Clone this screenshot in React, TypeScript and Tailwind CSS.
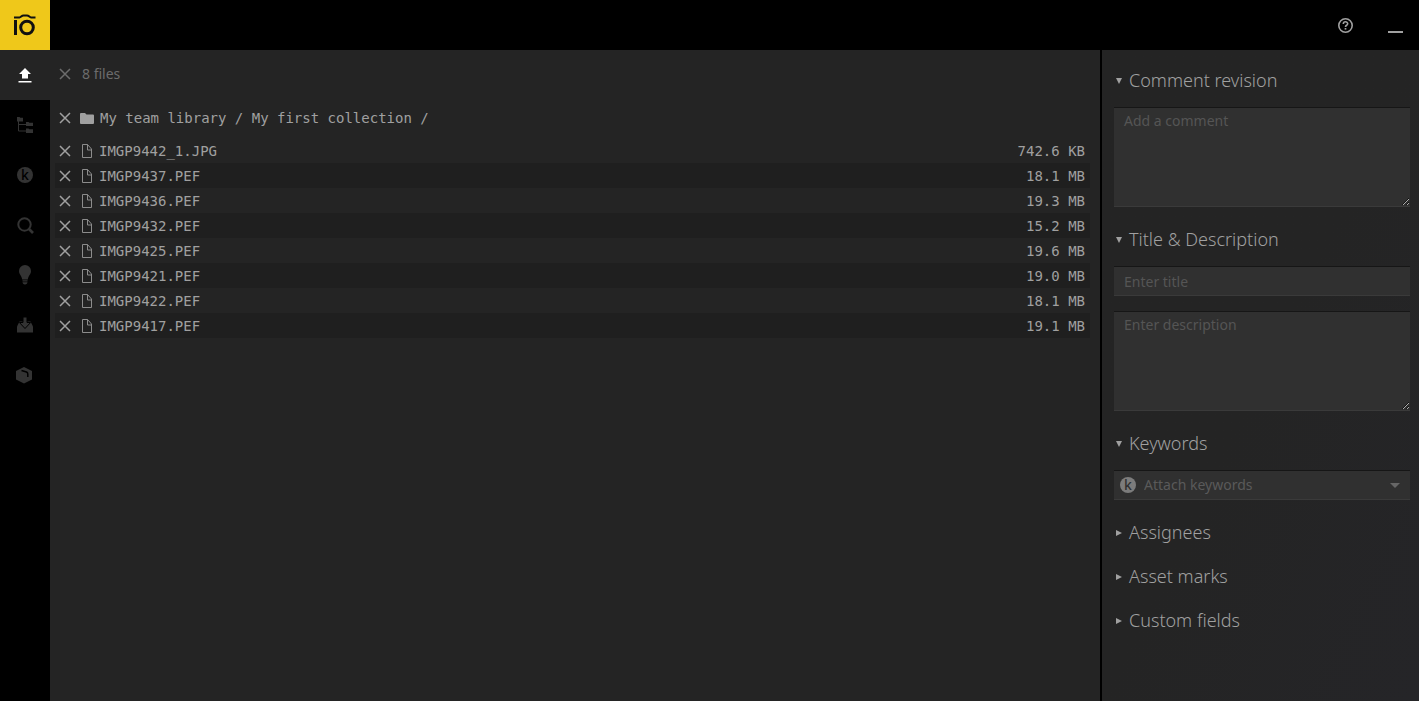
import { useState } from "react";
import type { ReactNode } from "react";

const files = [
  { name: "IMGP9442_1.JPG", size: "742.6 KB" },
  { name: "IMGP9437.PEF", size: "18.1 MB" },
  { name: "IMGP9436.PEF", size: "19.3 MB" },
  { name: "IMGP9432.PEF", size: "15.2 MB" },
  { name: "IMGP9425.PEF", size: "19.6 MB" },
  { name: "IMGP9421.PEF", size: "19.0 MB" },
  { name: "IMGP9422.PEF", size: "18.1 MB" },
  { name: "IMGP9417.PEF", size: "19.1 MB" },
];

const fieldClass =
  "block w-full border-t border-b border-t-[#161616] border-b-[#3a3a3a] bg-[#303030] text-sm outline-none placeholder:text-[#555]";

const Logo = () => (
  <svg width="24" height="22" viewBox="0 0 24 22" fill="none" stroke="#111">
    <path d="M1 3.5h5.5c1.500 0 2-2 4-2h3.500c2 0 2.500 2 4 2h4.500" strokeWidth="2" />
    <path d="M2.500 6v15" strokeWidth="3" />
    <circle cx="14" cy="13.500" r="6.300" strokeWidth="3" />
  </svg>
);

const KeywordIcon = ({ letter }: { letter: string }) => (
  <svg width="16" height="16" viewBox="0 0 16 16" fill="currentColor" className="overflow-visible">
    <circle cx="8" cy="8" r="8" />
    <text
      x="8"
      y="13"
      textAnchor="middle"
      fill={letter}
      className="font-['Noto_Sans',sans-serif] text-[14px] font-medium"
    >
      k
    </text>
  </svg>
);

const CloseIcon = () => (
  <svg width="12" height="12" viewBox="0 0 12 12" fill="none" stroke="currentColor" strokeWidth="1.500">
    <path d="M1 1l10 10M11 1L1 11" />
  </svg>
);

const FileIcon = () => (
  <svg width="10" height="14" viewBox="0 0 10 14" fill="none" stroke="currentColor" className="text-[#8c8c8c]">
    <path d="M.5.5h5l4 4.500v8.500h-9zM5.500.5v5.500h4" />
  </svg>
);

const FolderIcon = () => (
  <svg width="14" height="11" viewBox="0 0 14 11" fill="currentColor">
    <path d="M0 1a1 1 0 0 1 1-1h4l1.500 1.500H13a1 1 0 0 1 1 1V10a1 1 0 0 1-1 1H1a1 1 0 0 1-1-1z" />
  </svg>
);

const navItems: { label: string; icon: ReactNode }[] = [
  {
    label: "Upload",
    icon: (
      <svg width="14" height="16" viewBox="0 0 14 16" fill="currentColor">
        <path d="M7 1l6 6h-3v4.500H4V7H1zM.5 14h13v1.500H.5z" />
      </svg>
    ),
  },
  {
    label: "Collections",
    icon: (
      <svg width="16" height="16" viewBox="0 0 16 16" fill="currentColor">
        <path d="M0 0h2.500l.8.8H6V4.500H0zM9 5h2.500l.8.8H16V9H9zM9 11.500h2.500l.8.8H16v3.700H9z" />
        <path d="M1.500 4v10H9M1.500 7.500H9" fill="none" stroke="currentColor" />
      </svg>
    ),
  },
  { label: "Keywords", icon: <KeywordIcon letter="#000" /> },
  {
    label: "Search",
    icon: (
      <svg width="17" height="17" viewBox="0 0 17 17" fill="none" stroke="currentColor">
        <circle cx="7.500" cy="7.500" r="6.200" strokeWidth="2" />
        <path d="M12 12l4 4" strokeWidth="2.600" />
      </svg>
    ),
  },
  {
    label: "Lightboards",
    icon: (
      <svg width="12" height="20" viewBox="0 0 12 20" fill="currentColor">
        <path d="M6 0a6 6 0 0 1 6 6c0 3.500-2.700 4.500-3.200 8.500H3.200C2.700 10.500 0 9.500 0 6a6 6 0 0 1 6-6zM3.500 15.300h5v1.200h-5zM3.500 17.200h5c0 1-1 2.300-2.500 2.300s-2.500-1.300-2.500-2.300z" />
      </svg>
    ),
  },
  {
    label: "Inbox",
    icon: (
      <svg width="16" height="16" viewBox="0 0 16 16" fill="currentColor">
        <path d="M2.500 4.500h11L16 9.500v6H0v-6z" />
        <path d="M6 0h4v5.500h3.600L8 11.500 2.400 5.500H6z" stroke="#000" strokeWidth="1" />
      </svg>
    ),
  },
  {
    label: "Packages",
    icon: (
      <svg width="18" height="17" viewBox="0 0 18 17" fill="currentColor">
        <path d="M8 0l8 4v8.500l-8 4-8-4V4z" />
        <path d="M5.500 3.500l5 1.500c1 .5 1.300 1 1.300 2v3" fill="none" stroke="#000" strokeWidth="1.500" />
      </svg>
    ),
  },
];

type SectionProps = { title: string; defaultOpen?: boolean; children?: ReactNode };

const Section = ({ title, defaultOpen = false, children }: SectionProps) => {
  const [open, setOpen] = useState(defaultOpen);

  return (
    <section>
      <h2>
        <button
          type="button"
          aria-expanded={open}
          onClick={() => setOpen(!open)}
          className="flex h-11 w-full items-center gap-1.5 pl-0.5 text-left text-lg font-light text-[#a0a0a0]"
        >
          <svg width="7" height="7" viewBox="0 0 7 7" fill="currentColor">
            <path d={open ? "M0 1h6l-3 6z" : "M0 1l6 3-6 3z"} />
          </svg>
          {title}
        </button>
      </h2>
      {open && children && <div className="flex flex-col gap-[15px] pt-[5px] pb-2.5">{children}</div>}
    </section>
  );
};

const App = () => {
  return (
    <div className="flex min-h-screen flex-col bg-[#242424] font-['Noto_Sans',sans-serif] text-[#a0a0a0]">
      <header className="flex h-[50px] items-center justify-between bg-black">
        <a href="#" aria-label="Home" className="flex size-[50px] items-center justify-center bg-[#efc81a]">
          <Logo />
        </a>
        <div className="flex items-center gap-[34px] pr-4">
          <button type="button" aria-label="Help">
            <svg width="16" height="16" viewBox="0 0 16 16" fill="none" stroke="currentColor">
              <circle cx="7.500" cy="8.500" r="6.700" strokeWidth="1.600" />
              <path d="M5.300 7c0-3 4.400-2.800 4.400-.3 0 1.500-2.200 1.600-2.200 3.200" strokeWidth="1.600" />
              <path d="M7.500 11v1.600" strokeWidth="1.700" />
            </svg>
          </button>
          <button type="button" aria-label="Minimize" className="flex h-4 items-end">
            <span className="block h-0.5 w-[15px] bg-[#a0a0a0]" />
          </button>
        </div>
      </header>

      <div className="flex flex-1">
        {/* Side navigation */}
        <nav className="flex w-[50px] shrink-0 flex-col bg-black">
          {navItems.map((item, idx) => (
            <button
              key={item.label}
              type="button"
              aria-label={item.label}
              className={`flex size-[50px] items-center justify-center ${
                idx === 0 ? "bg-[#242424] text-white" : "text-[#333]"
              }`}
            >
              {item.icon}
            </button>
          ))}
        </nav>

        {/* Upload list */}
        <main className="min-w-0 flex-1 pr-2.5 pl-[5px]">
          <div className="flex h-12 items-center gap-[11px] pl-1 text-sm text-[#6c6c6c]">
            <button type="button" aria-label="Remove all files">
              <CloseIcon />
            </button>
            8 files
          </div>
          <div className="flex h-10 items-center pl-1 font-['DejaVu_Sans_Mono',monospace] text-sm">
            <button type="button" aria-label="Remove collection" className="mr-[9px]">
              <CloseIcon />
            </button>
            <FolderIcon />
            <span className="ml-1.5">My team library / My first collection /</span>
          </div>
          <table className="w-full font-['DejaVu_Sans_Mono',monospace] text-sm">
            <tbody>
              {files.map((file) => (
                <tr key={file.name} className="h-[25px] even:bg-[#1f1f1f]">
                  <td className="w-[27px] pl-1">
                    <button type="button" aria-label={`Remove ${file.name}`} className="block">
                      <CloseIcon />
                    </button>
                  </td>
                  <td>
                    <div className="flex items-center gap-[7px]">
                      <FileIcon />
                      {file.name}
                    </div>
                  </td>
                  <td className="pr-[5px] text-right">{file.size}</td>
                </tr>
              ))}
            </tbody>
          </table>
        </main>

        {/* Asset details */}
        <aside className="w-[319px] shrink-0 border-l-2 border-black bg-linear-to-br from-[#242424] from-50% to-[#252528] pt-2 pr-[9px] pl-3">
          <Section title="Comment revision" defaultOpen>
            <textarea
              aria-label="Comment"
              placeholder="Add a comment"
              className={`${fieldClass} h-[100px] resize-y px-2.5 py-[3px] scheme-dark`}
            />
          </Section>
          <Section title="Title & Description" defaultOpen>
            <input
              type="text"
              aria-label="Title"
              placeholder="Enter title"
              className={`${fieldClass} h-[30px] px-2.5`}
            />
            <textarea
              aria-label="Description"
              placeholder="Enter description"
              className={`${fieldClass} h-[100px] resize-y px-2.5 py-[3px] scheme-dark`}
            />
          </Section>
          <Section title="Keywords" defaultOpen>
            <div className="relative">
              <select
                aria-label="Keywords"
                defaultValue=""
                className={`${fieldClass} h-[30px] appearance-none pr-6 pl-[30px] text-[#5a5a5a]`}
              >
                <option value="">Attach keywords</option>
              </select>
              <span className="pointer-events-none absolute inset-y-0 left-1.5 flex items-center text-[#7c7c7c]">
                <KeywordIcon letter="#303030" />
              </span>
              <span className="pointer-events-none absolute inset-y-0 right-2.5 flex items-center text-[#666]">
                <svg width="10" height="5" viewBox="0 0 10 5" fill="currentColor">
                  <path d="M0 0h10L5 5z" />
                </svg>
              </span>
            </div>
          </Section>
          <Section title="Assignees" />
          <Section title="Asset marks" />
          <Section title="Custom fields" />
        </aside>
      </div>
    </div>
  );
};

export default App;
